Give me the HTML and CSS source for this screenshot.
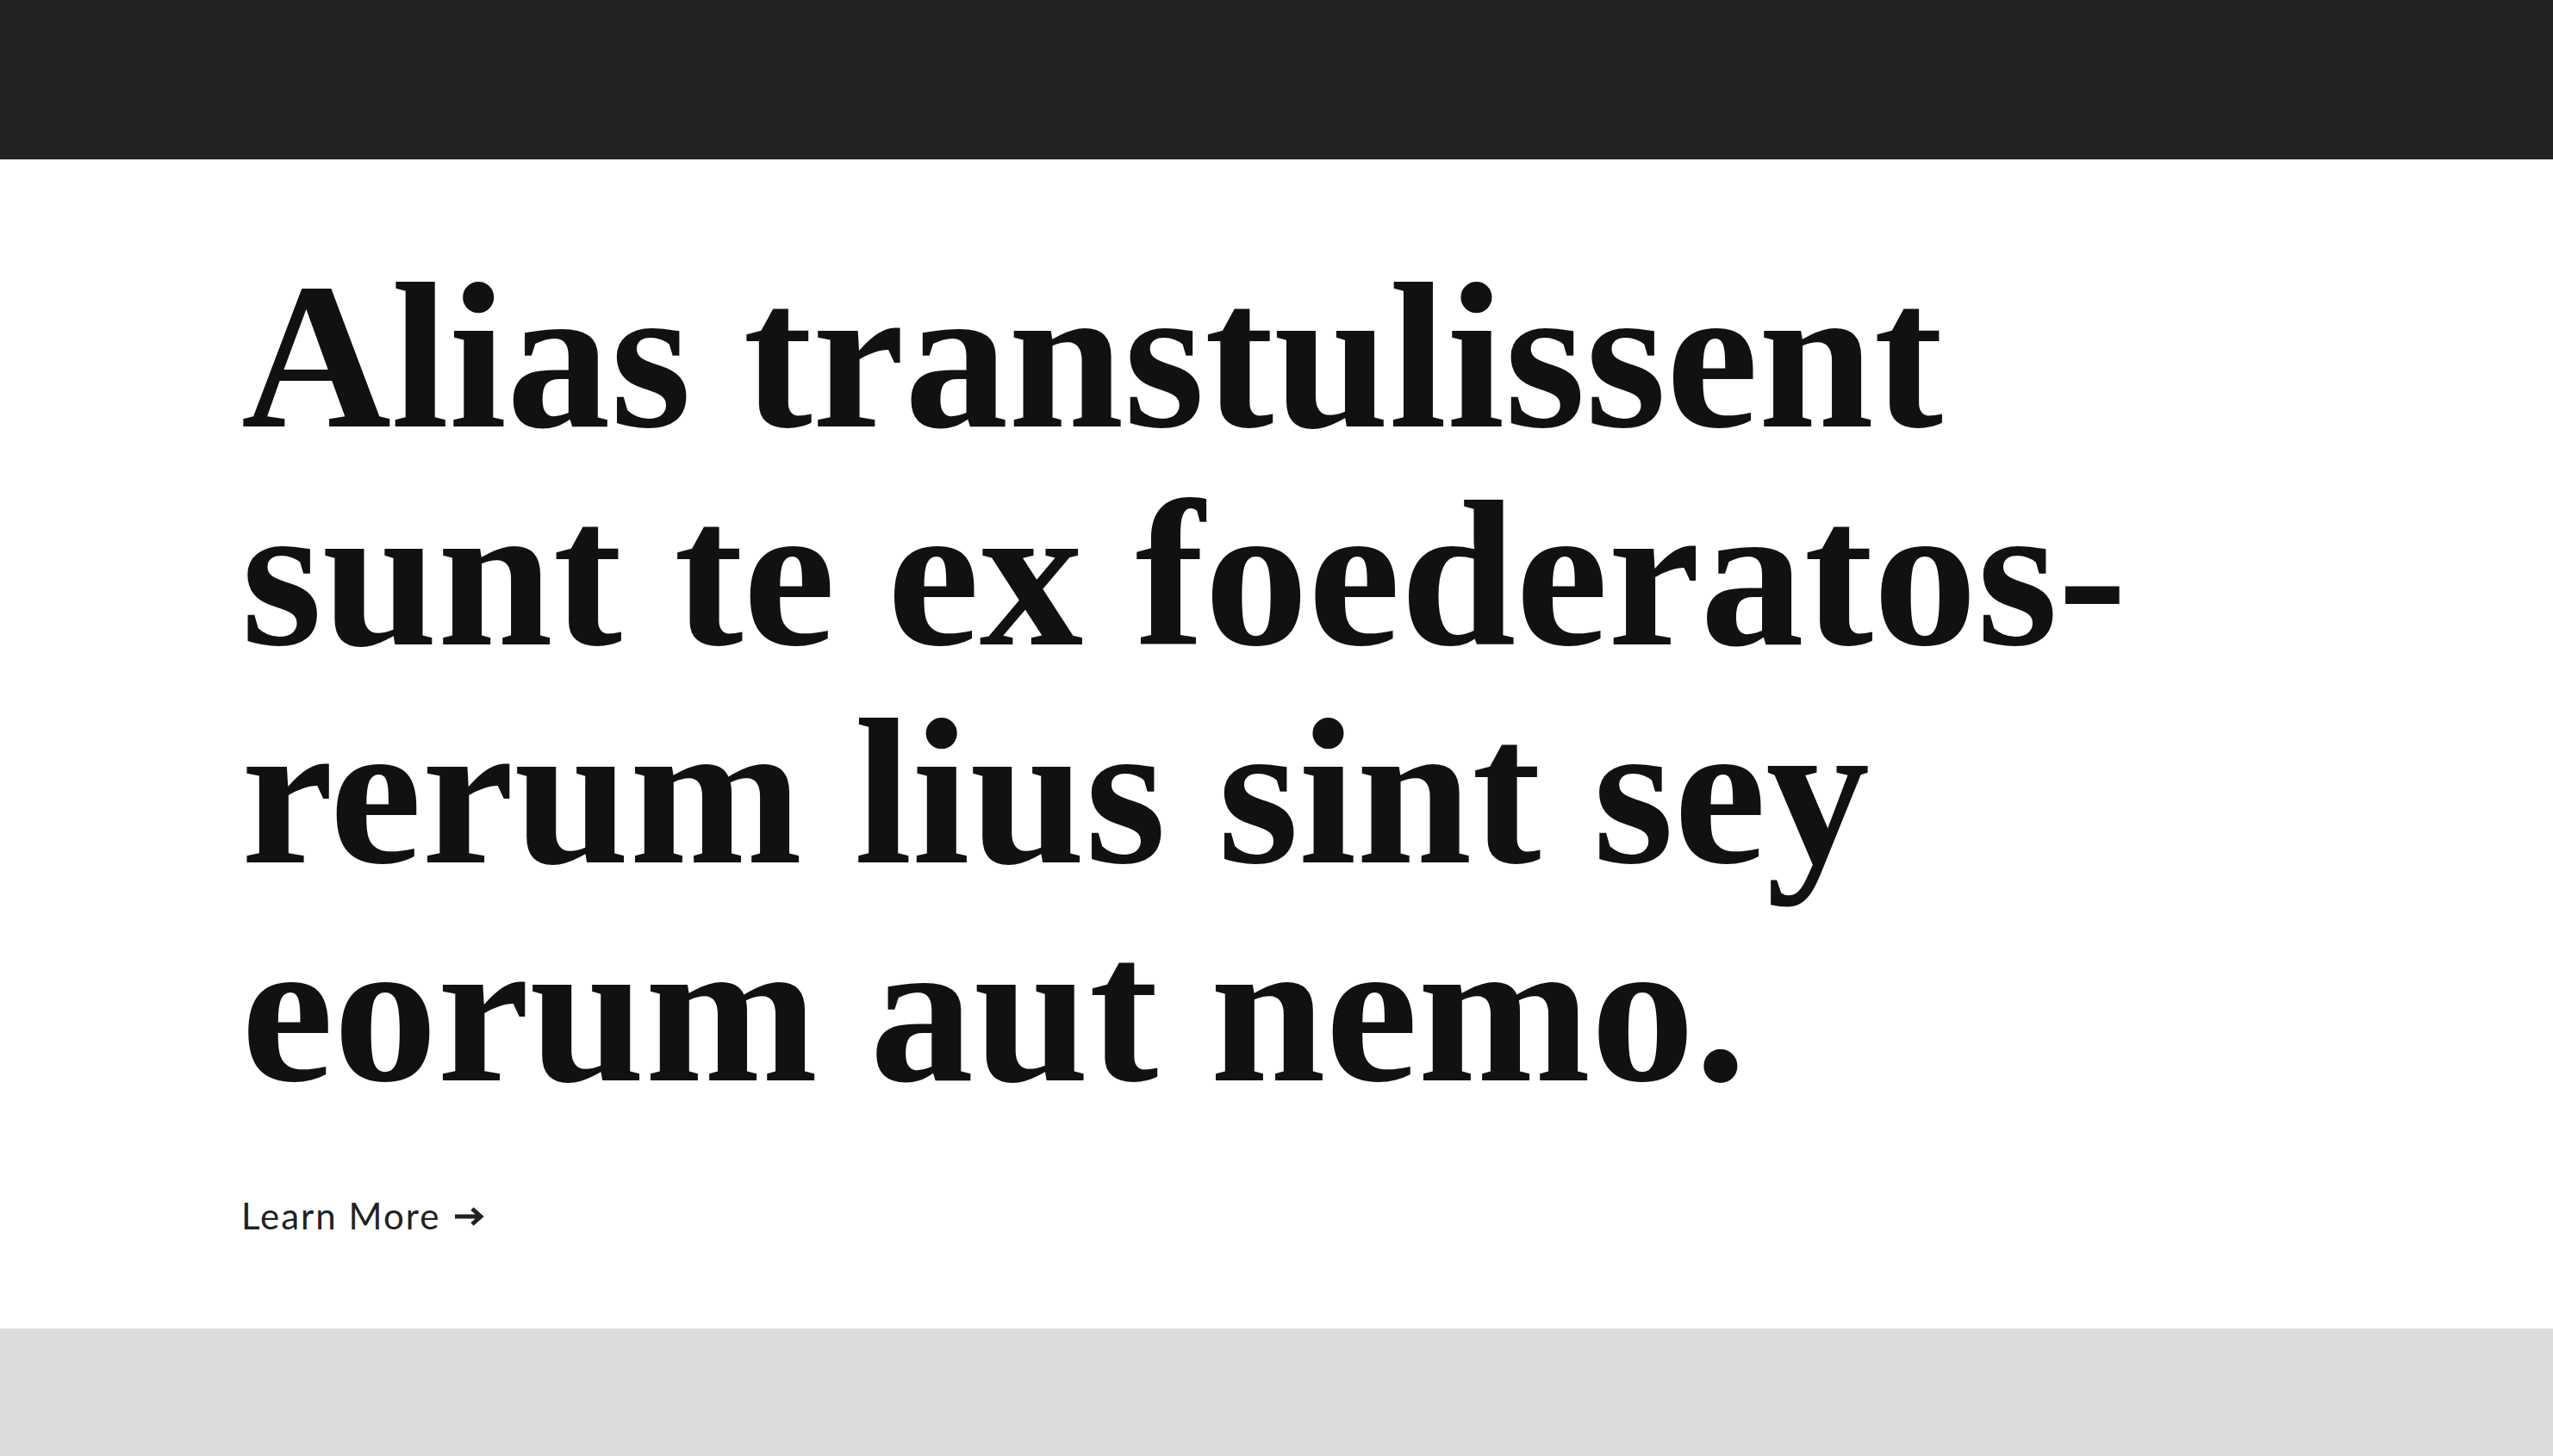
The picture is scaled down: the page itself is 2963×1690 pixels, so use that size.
FILE: index.html
```html
<!DOCTYPE html>
<html lang="la">
<head>
<meta charset="utf-8">
<title>Alias transtulissent</title>
<link rel="stylesheet" href="styles.css">
</head>
<body>
<header class="topbar"></header>
<main class="hero">
  <h1 class="hero-title">Alias transtulissent<br>sunt te ex foederatos-<br>rerum lius sint sey<br>eorum aut nemo.</h1>
  <a class="hero-link" href="#"><span class="hero-link-text">Learn More</span>
    <svg class="arrow" width="36" height="24" viewBox="0 0 36 24" aria-hidden="true"><path d="M1 12H31M21 3l10 9-10 9" fill="none" stroke="#222" stroke-width="5" stroke-linecap="butt" stroke-linejoin="miter"/></svg>
  </a>
</main>
<footer class="bottom"></footer>
</body>
</html>
```
FILE: styles.css
```css
html, body {
  margin: 0;
  padding: 0;
  background: #ffffff;
}
.topbar {
  height: 185px;
  background: #232323;
}
.hero {
  box-sizing: border-box;
  height: 1357px;
  padding: 102px 280px 0 280px;
  display: flex;
  flex-direction: column;
  align-items: flex-start;
}
.hero-title {
  margin: 0;
  font-family: "Liberation Serif", "Times New Roman", serif;
  font-weight: 700;
  font-size: 241px;
  line-height: 253px;
  color: #111111;
  white-space: nowrap;
}
.hero-link {
  margin-top: 87px;
  display: flex;
  align-items: center;
  gap: 16px;
  font-family: Lato, "Open Sans", sans-serif;
  font-weight: 400;
  font-size: 42px;
  line-height: 1.2;
  color: #222222;
  text-decoration: none;
}
.hero-link-text {
  letter-spacing: 2px;
}
.arrow {
  display: block;
  margin-top: 2px;
}
.bottom {
  height: 148px;
  background: #dcdcdc;
}
```
